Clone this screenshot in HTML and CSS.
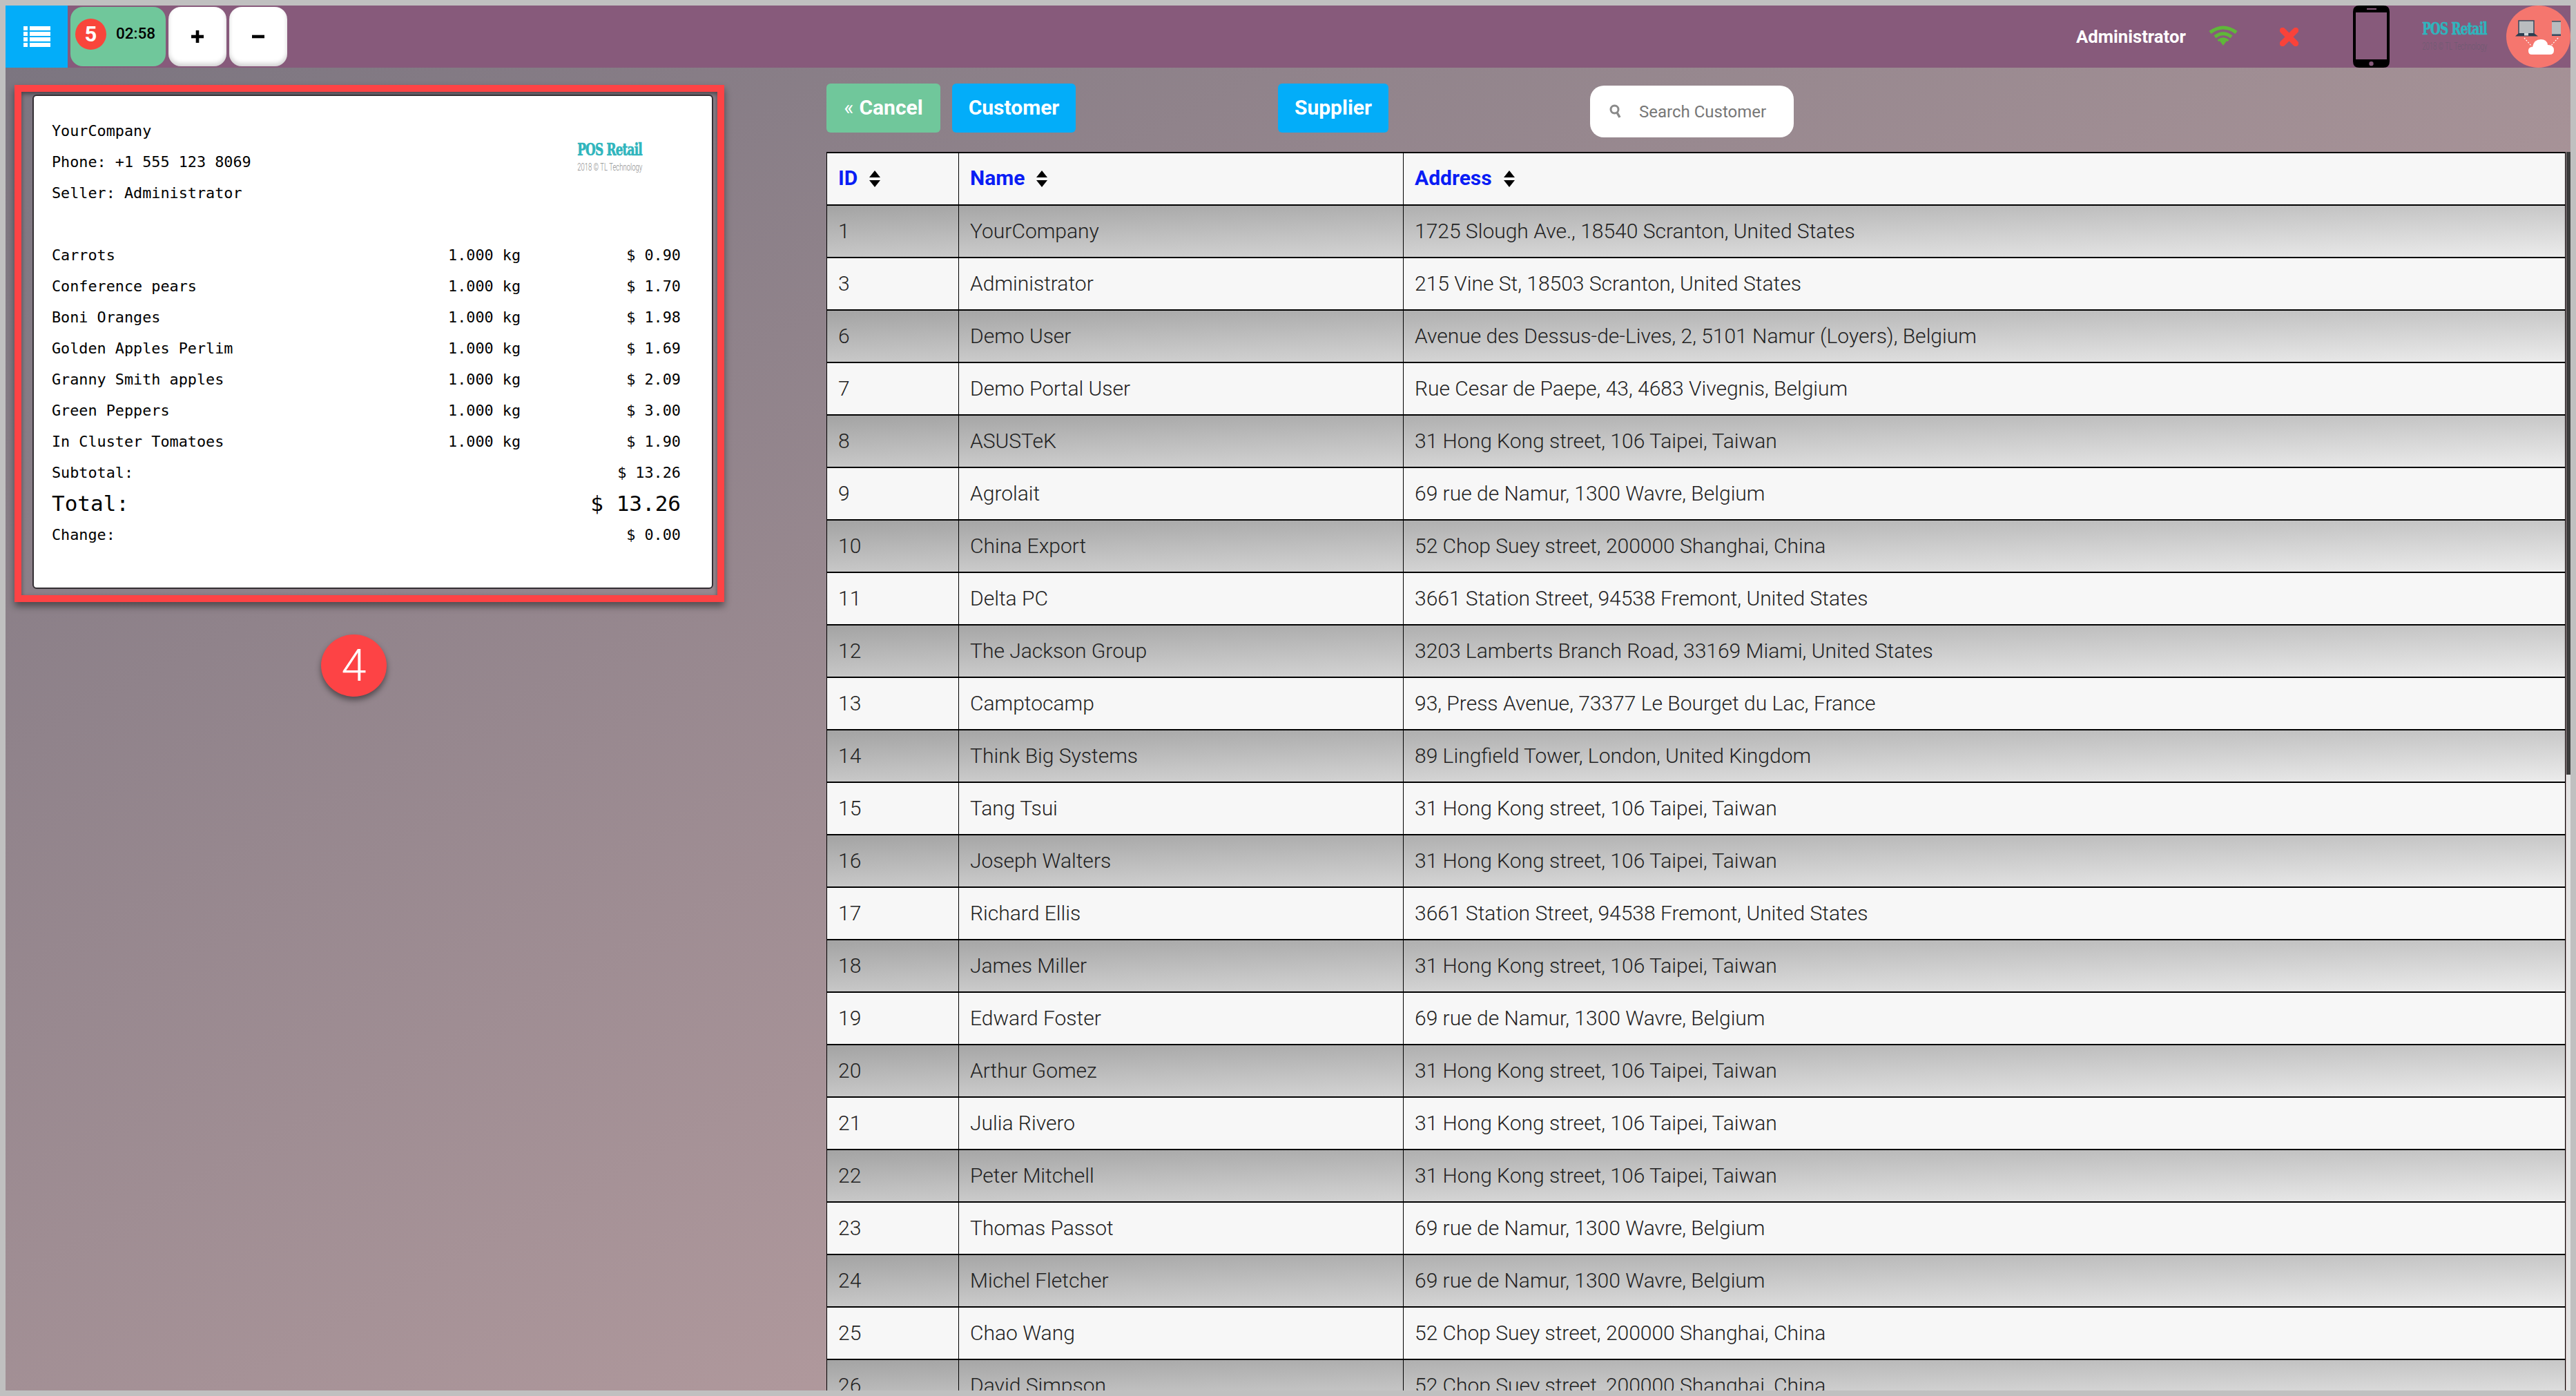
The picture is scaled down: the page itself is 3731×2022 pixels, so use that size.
FILE: index.html
```html
<!DOCTYPE html>
<html lang="en">
<head>
<meta charset="utf-8">
<title>POS Retail</title>
<link rel="stylesheet" href="styles.css">
</head>
<body>
<div class="page">
  <header class="topbar">
    <div class="menu-btn">
      <svg class="icon-list" viewBox="0 0 39 30"><g fill="#fff"><rect x="0" y="0" width="6" height="6"/><rect x="9" y="0" width="30" height="6"/><rect x="0" y="8" width="6" height="6"/><rect x="9" y="8" width="30" height="6"/><rect x="0" y="16" width="6" height="6"/><rect x="9" y="16" width="30" height="6"/><rect x="0" y="24" width="6" height="6"/><rect x="9" y="24" width="30" height="6"/></g></svg>
    </div>
    <div class="order-tab"><span class="order-count">5</span><span class="order-time">02:58</span></div>
    <div class="square-btn"><svg class="icon-sign" viewBox="0 0 18 18"><rect x="6.7" y="0" width="4.6" height="18" fill="#000"/><rect x="0" y="6.7" width="18" height="4.6" fill="#000"/></svg></div>
    <div class="square-btn"><svg class="icon-sign" viewBox="0 0 18 18"><rect x="0" y="6.7" width="18" height="4.6" fill="#000"/></svg></div>

    <div class="status">
      <span class="user-name">Administrator</span>
      <svg class="icon-wifi" viewBox="0 0 42 30"><g fill="none" stroke="#5fb739" stroke-width="5"><path d="M2 11 Q21 -3 40 11"/><path d="M9 17.5 Q21 8 33 17.5"/></g><path d="M15 22 Q21 18 27 22 L21 30 Z" fill="#5fb739"/><path d="M13.5 23 Q21 16.5 28.500 23" fill="none" stroke="#5fb739" stroke-width="3"/></svg>
      <svg class="icon-cross" viewBox="0 0 27 27"><path d="M4 4 L23 23 M23 4 L4 23" stroke="#f9423a" stroke-width="8.500" stroke-linecap="round"/></svg>
      <svg class="icon-phone" viewBox="0 0 53 90"><path fill="#000" fill-rule="evenodd" d="M9 0 H44 Q53 0 53 9 V81 Q53 90 44 90 H9 Q0 90 0 81 V9 Q0 0 9 0 Z M4 10 V78 H49 V10 Z M20 4 V6 H34 V4 Z M26.500 81 A3.200 3.200 0 1 0 26.500 87.400 A3.200 3.200 0 1 0 26.500 81 Z"/></svg>
      <div class="logo logo-top"><span class="logo-name">POS Retail</span><span class="logo-sub">2018 © TL Technology</span></div>
      <svg class="icon-cloud" viewBox="0 0 93 90">
        <ellipse cx="46.500" cy="45" rx="46.500" ry="45" fill="#f5766e"/>
        <rect x="18" y="22" width="22" height="19" fill="#b9bcbf" stroke="#34495e" stroke-width="1.500"/>
        <path d="M18 40 H40 L46 44.500 H13 Z" fill="#2c3e50"/>
        <rect x="26" y="40" width="6" height="3.500" fill="#d5d7d9"/>
        <rect x="66" y="22" width="13" height="22" rx="1" fill="#b9bcbf"/>
        <rect x="66" y="22" width="13" height="2" fill="#5c6670"/>
        <rect x="66" y="41.500" width="13" height="2.500" fill="#34495e"/>
        <path d="M26 47 L37 59 M75 47 L64 59" stroke="#fff" stroke-width="1.300" stroke-dasharray="2 2" fill="none"/>
        <path d="M37 71 Q32 71 32 65.500 Q32 60 38 60 Q40 49 50 49 Q59 49 60 57 Q69 57 69 65 Q69 71 63 71 Z" fill="#fff"/>
      </svg>
    </div>
  </header>

  <main class="workspace">
    <section class="receipt-col">
      <div class="receipt-frame">
        <div class="paper">
          <div class="paper-head">
            <div>
              <div class="line">YourCompany</div>
              <div class="line">Phone: +1 555 123 8069</div>
              <div class="line">Seller: Administrator</div>
            </div>
            <div class="logo logo-paper"><span class="logo-name">POS Retail</span><span class="logo-sub">2018 © TL Technology</span></div>
          </div>
          <div class="spacer"></div>
          <div class="item"><span>Carrots</span><span class="num">1.000 kg</span><span class="num">$ 0.90</span></div>
          <div class="item"><span>Conference pears</span><span class="num">1.000 kg</span><span class="num">$ 1.70</span></div>
          <div class="item"><span>Boni Oranges</span><span class="num">1.000 kg</span><span class="num">$ 1.98</span></div>
          <div class="item"><span>Golden Apples Perlim</span><span class="num">1.000 kg</span><span class="num">$ 1.69</span></div>
          <div class="item"><span>Granny Smith apples</span><span class="num">1.000 kg</span><span class="num">$ 2.09</span></div>
          <div class="item"><span>Green Peppers</span><span class="num">1.000 kg</span><span class="num">$ 3.00</span></div>
          <div class="item"><span>In Cluster Tomatoes</span><span class="num">1.000 kg</span><span class="num">$ 1.90</span></div>
          <div class="item"><span>Subtotal:</span><span></span><span class="num">$ 13.26</span></div>
          <div class="item item-total"><span>Total:</span><span></span><span class="num">$ 13.26</span></div>
          <div class="item"><span>Change:</span><span></span><span class="num">$ 0.00</span></div>
        </div>
      </div>
      <div class="step-badge">4</div>
    </section>

    <section class="client-col">
      <div class="toolbar">
        <button class="btn btn-green"><span class="chevrons">«</span>Cancel</button>
        <button class="btn btn-blue btn-customer">Customer</button>
        <button class="btn btn-blue btn-supplier">Supplier</button>
        <div class="search">
          <svg class="icon-search" viewBox="0 0 17 21"><circle cx="7.500" cy="7.500" r="5.500" fill="none" stroke="#8a8a8a" stroke-width="3"/><path d="M11 12 L15 19" stroke="#8a8a8a" stroke-width="3.500"/></svg>
          <span>Search Customer</span>
        </div>
      </div>
      <div class="table-row">
        <table class="clients">
          <colgroup><col class="col-id"><col class="col-name"><col></colgroup>
          <thead>
            <tr>
              <th>ID<svg class="icon-sort" viewBox="0 0 18 24"><path d="M9 0 L17 10 H1 Z M1 14 H17 L9 24 Z" fill="#000"/></svg></th>
              <th>Name<svg class="icon-sort" viewBox="0 0 18 24"><path d="M9 0 L17 10 H1 Z M1 14 H17 L9 24 Z" fill="#000"/></svg></th>
              <th>Address<svg class="icon-sort" viewBox="0 0 18 24"><path d="M9 0 L17 10 H1 Z M1 14 H17 L9 24 Z" fill="#000"/></svg></th>
            </tr>
          </thead>
          <tbody>
            <tr><td>1</td><td>YourCompany</td><td>1725 Slough Ave., 18540 Scranton, United States</td></tr>
            <tr><td>3</td><td>Administrator</td><td>215 Vine St, 18503 Scranton, United States</td></tr>
            <tr><td>6</td><td>Demo User</td><td>Avenue des Dessus-de-Lives, 2, 5101 Namur (Loyers), Belgium</td></tr>
            <tr><td>7</td><td>Demo Portal User</td><td>Rue Cesar de Paepe, 43, 4683 Vivegnis, Belgium</td></tr>
            <tr><td>8</td><td>ASUSTeK</td><td>31 Hong Kong street, 106 Taipei, Taiwan</td></tr>
            <tr><td>9</td><td>Agrolait</td><td>69 rue de Namur, 1300 Wavre, Belgium</td></tr>
            <tr><td>10</td><td>China Export</td><td>52 Chop Suey street, 200000 Shanghai, China</td></tr>
            <tr><td>11</td><td>Delta PC</td><td>3661 Station Street, 94538 Fremont, United States</td></tr>
            <tr><td>12</td><td>The Jackson Group</td><td>3203 Lamberts Branch Road, 33169 Miami, United States</td></tr>
            <tr><td>13</td><td>Camptocamp</td><td>93, Press Avenue, 73377 Le Bourget du Lac, France</td></tr>
            <tr><td>14</td><td>Think Big Systems</td><td>89 Lingfield Tower, London, United Kingdom</td></tr>
            <tr><td>15</td><td>Tang Tsui</td><td>31 Hong Kong street, 106 Taipei, Taiwan</td></tr>
            <tr><td>16</td><td>Joseph Walters</td><td>31 Hong Kong street, 106 Taipei, Taiwan</td></tr>
            <tr><td>17</td><td>Richard Ellis</td><td>3661 Station Street, 94538 Fremont, United States</td></tr>
            <tr><td>18</td><td>James Miller</td><td>31 Hong Kong street, 106 Taipei, Taiwan</td></tr>
            <tr><td>19</td><td>Edward Foster</td><td>69 rue de Namur, 1300 Wavre, Belgium</td></tr>
            <tr><td>20</td><td>Arthur Gomez</td><td>31 Hong Kong street, 106 Taipei, Taiwan</td></tr>
            <tr><td>21</td><td>Julia Rivero</td><td>31 Hong Kong street, 106 Taipei, Taiwan</td></tr>
            <tr><td>22</td><td>Peter Mitchell</td><td>31 Hong Kong street, 106 Taipei, Taiwan</td></tr>
            <tr><td>23</td><td>Thomas Passot</td><td>69 rue de Namur, 1300 Wavre, Belgium</td></tr>
            <tr><td>24</td><td>Michel Fletcher</td><td>69 rue de Namur, 1300 Wavre, Belgium</td></tr>
            <tr><td>25</td><td>Chao Wang</td><td>52 Chop Suey street, 200000 Shanghai, China</td></tr>
            <tr><td>26</td><td>David Simpson</td><td>52 Chop Suey street, 200000 Shanghai, China</td></tr>
          </tbody>
        </table>
        <div class="scrollbar"><div class="scroll-thumb"></div></div>
      </div>
    </section>
  </main>
</div>
</body>
</html>
```
FILE: styles.css
```css
* { box-sizing: border-box; }
html, body { height: 100%; }
body {
  margin: 8px;
  background: #c0c0c0;
  font-family: Roboto, "Liberation Sans", sans-serif;
  overflow: hidden;
}
.page {
  width: 3715px;
  height: 2006px;
  display: flex;
  flex-direction: column;
  overflow: hidden;
  background: linear-gradient(to bottom right, #7a747f, #cbabab);
}

/* top bar */
.topbar {
  flex: 0 0 90px;
  display: flex;
  align-items: center;
  background: #875a7b;
}
.menu-btn {
  width: 90px;
  height: 90px;
  background: #03adf9;
  display: flex;
  align-items: center;
  justify-content: center;
}
.icon-list { width: 39px; height: 30px; display: block; }
.order-tab {
  width: 138px;
  height: 86px;
  margin-left: 4px;
  padding: 17px 0 0 7px;
  display: flex;
  align-items: flex-start;
  background: #70c79b;
  border-radius: 18px;
}
.order-count {
  width: 45px;
  height: 45px;
  border-radius: 50%;
  background: #f9453b;
  color: #fff;
  font-size: 31px;
  font-weight: 700;
  line-height: 45px;
  text-align: center;
}
.order-time {
  margin-left: 14px;
  margin-top: 8px;
  font-size: 22.500px;
  font-weight: 500;
  line-height: 26px;
  color: #000;
}
.square-btn {
  width: 84px;
  height: 86px;
  margin-left: 4px;
  display: flex;
  align-items: center;
  justify-content: center;
  background: #fff;
  border-radius: 18px;
  box-shadow: inset 0 -4px 6px rgba(0, 0, 0, .18);
}
.icon-sign { width: 18px; height: 18px; display: block; }
.status {
  margin-left: auto;
  height: 90px;
  display: flex;
  align-items: center;
}
.user-name {
  width: 162px;
  color: #fff;
  font-size: 25.700px;
  font-weight: 700;
  white-space: nowrap;
}
.icon-wifi { width: 42px; height: 30px; margin-left: 30px; margin-top: -4px; display: block; }
.icon-cross { width: 27px; height: 27px; margin-left: 61px; display: block; }
.icon-phone { width: 53px; height: 90px; margin-left: 79px; display: block; }
.icon-cloud { width: 93px; height: 90px; margin-left: 28px; display: block; }

/* logo */
.logo { display: flex; flex-direction: column; align-items: center; white-space: nowrap; }
.logo-name {
  font-family: "DejaVu Serif Condensed", "DejaVu Serif", serif;
  font-weight: 700;
  font-size: 24px;
  line-height: 26px;
  letter-spacing: -1px;
  color: #2fb5bd;
  -webkit-text-stroke: .7px #2fb5bd;
  transform: scaleX(.78);
}
.logo-sub {
  font-family: Roboto, sans-serif;
  font-size: 14px;
  font-weight: 300;
  line-height: 14px;
  margin-top: 5px;
  transform: scaleX(.68);
}
.logo-top { width: 94px; margin-left: 47px; margin-top: -3px; }
.logo-top .logo-sub { color: #6e5a72; }
.logo-paper { width: 94px; margin-right: 101px; margin-top: 37px; align-self: flex-start; }
.logo-paper .logo-sub { color: #8c8c8c; }

/* workspace */
.workspace {
  flex: 1;
  min-height: 0;
  display: grid;
  grid-template-columns: 1189px 1fr;
}
.receipt-col { padding: 25px 0 0 13px; }
.receipt-frame {
  width: 1028px;
  height: 749px;
  padding: 4px 6px 9px 16px;
  border: 10px solid #fd4345;
  box-shadow: 0 6px 10px rgba(0, 0, 0, .45), inset 0 3px 6px rgba(0, 0, 0, .45);
}
.paper {
  height: 716px;
  padding: 28px 0 0 26px;
  background: #fff;
  border: 2px solid #332e33;
  border-radius: 6px;
  font-family: "DejaVu Sans Mono", "Liberation Mono", monospace;
  font-size: 21.800px;
  line-height: 45px;
  color: #000;
}
.paper-head { display: flex; justify-content: space-between; }
.line { white-space: nowrap; }
.spacer { height: 45px; }
.item {
  height: 45px;
  display: grid;
  grid-template-columns: 1fr 120px 232px;
  padding-right: 45px;
}
.item-total { font-size: 31px; }
.num { text-align: right; white-space: nowrap; }
.step-badge {
  width: 95px;
  height: 90px;
  margin: 47px 0 0 444px;
  border-radius: 50%;
  background: #fd4345;
  box-shadow: 0 5px 8px rgba(0, 0, 0, .45);
  color: #fff;
  font-size: 65px;
  font-weight: 300;
  line-height: 90px;
  text-align: center;
}

/* clients */
.client-col { min-width: 0; padding-top: 23px; }
.toolbar { height: 99px; display: flex; align-items: flex-start; }
.btn {
  height: 71px;
  border: 0;
  border-radius: 6px;
  color: #fff;
  font-family: inherit;
  font-size: 30px;
  font-weight: 700;
  white-space: nowrap;
  padding: 0 0 3px;
}
.chevrons { font-weight: 400; margin-right: 8px; }
.btn-green { width: 165px; background: #70c79b; }
.btn-blue { background: #03adf9; }
.btn-customer { width: 179px; margin-left: 17px; }
.btn-supplier { width: 160px; margin-left: 293px; }
.search {
  width: 295px;
  height: 75px;
  margin: 3px 0 0 292px;
  padding-left: 28px;
  display: flex;
  align-items: center;
  gap: 26px;
  background: #fff;
  border-radius: 20px;
  color: #777;
  font-size: 24px;
  white-space: nowrap;
}
.icon-search { width: 17px; height: 21px; flex: none; display: block; }
.table-row { display: flex; align-items: flex-start; gap: 1px; }
.clients {
  width: 2519px;
  flex: none;
  table-layout: fixed;
  border-collapse: collapse;
  font-size: 30px;
  font-weight: 300;
  color: #222;
}
.col-id { width: 191px; }
.col-name { width: 644px; }
.clients th, .clients td {
  height: 76px;
  padding: 0 0 1px 16px;
  border: 1px solid #000;
  border-top-width: 2px;
  border-bottom-width: 2px;
  text-align: left;
  vertical-align: middle;
  white-space: nowrap;
}
.clients thead tr { background: #f7f7f7; }
.clients th { color: #0a1df5; font-size: 30px; font-weight: 700; padding-bottom: 3px; }
.icon-sort { width: 18px; height: 24px; margin-left: 16px; vertical-align: -3px; }
.clients tbody tr:nth-child(odd) { background: linear-gradient(to bottom right, #a3a3a3, #ececec); }
.clients tbody tr:nth-child(even) { background: #f7f7f7; }
.scrollbar {
  width: 6px;
  height: 1794px;
  flex: none;
  background: #e4e4e4;
}
.scroll-thumb { height: 902px; background: #3c3c3c; }
```
